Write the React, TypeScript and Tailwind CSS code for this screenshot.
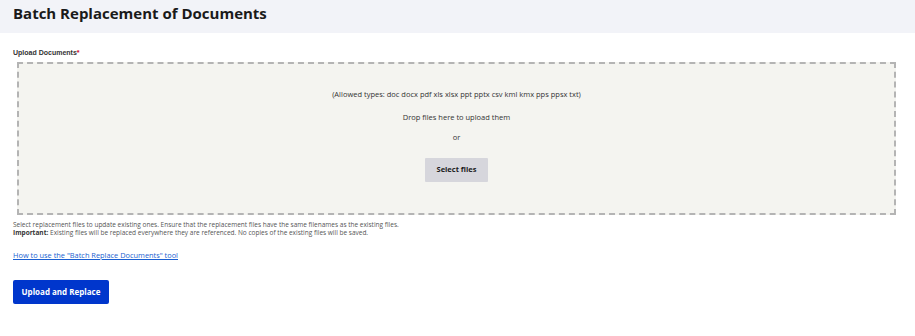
export default function App() {
  return (
    <div className="min-h-screen bg-white" style={{ fontFamily: '"Open Sans", "Noto Sans", sans-serif' }}>
      <div className="h-[33px] bg-[#f2f3f8] px-[13px] pt-[4px]">
        <h1 className="text-[15px] font-bold text-[#1a1a1a] leading-[18px]">Batch Replacement of Documents</h1>
      </div>

      <div className="px-[13px] pt-[15px]">
        <label className="block text-[7px] font-bold text-[#333] leading-[10px]" style={{ fontFamily: '"Liberation Sans", Arial, sans-serif' }}>
          Upload Documents<span className="text-[#d0021b]">*</span>
        </label>

        <div className="ml-[4px] mr-[6px] mt-[4px] h-[153px] border-2 border-dashed border-[#b4b4b4] bg-[#f4f4f0] flex flex-col items-center pt-[24px] text-[#333]">
          <p className="text-[7.5px] leading-[12px]">(Allowed types: doc docx pdf xls xlsx ppt pptx csv kml kmx pps ppsx txt)</p>
          <p className="text-[7.5px] leading-[12px] mt-[11px]">Drop files here to upload them</p>
          <p className="text-[7.5px] leading-[12px] mt-[8px]">or</p>
          <button className="mt-[15px] w-[63px] h-[24px] bg-[#d6d6dc] text-[7.5px] font-bold text-[#1a1a1a] rounded-[1px]">Select files</button>
        </div>

        <div className="mt-[6px] text-[6.5px] leading-[8px] text-[#555]">
          <p>Select replacement files to update existing ones. Ensure that the replacement files have the same filenames as the existing files.</p>
          <p><span className="font-bold text-[#333]">Important:</span> Existing files will be replaced everywhere they are referenced. No copies of the existing files will be saved.</p>
        </div>

        <a href="#" className="inline-block mt-[12px] text-[7.4px] leading-[12px] text-[#1a5fd1] underline">How to use the "Batch Replace Documents" tool</a>

        <div className="mt-[13px]">
          <button className="w-[96px] h-[24px] bg-[#0036cc] text-white text-[8px] font-bold rounded-[2px]">Upload and Replace</button>
        </div>
      </div>
    </div>
  );
}
